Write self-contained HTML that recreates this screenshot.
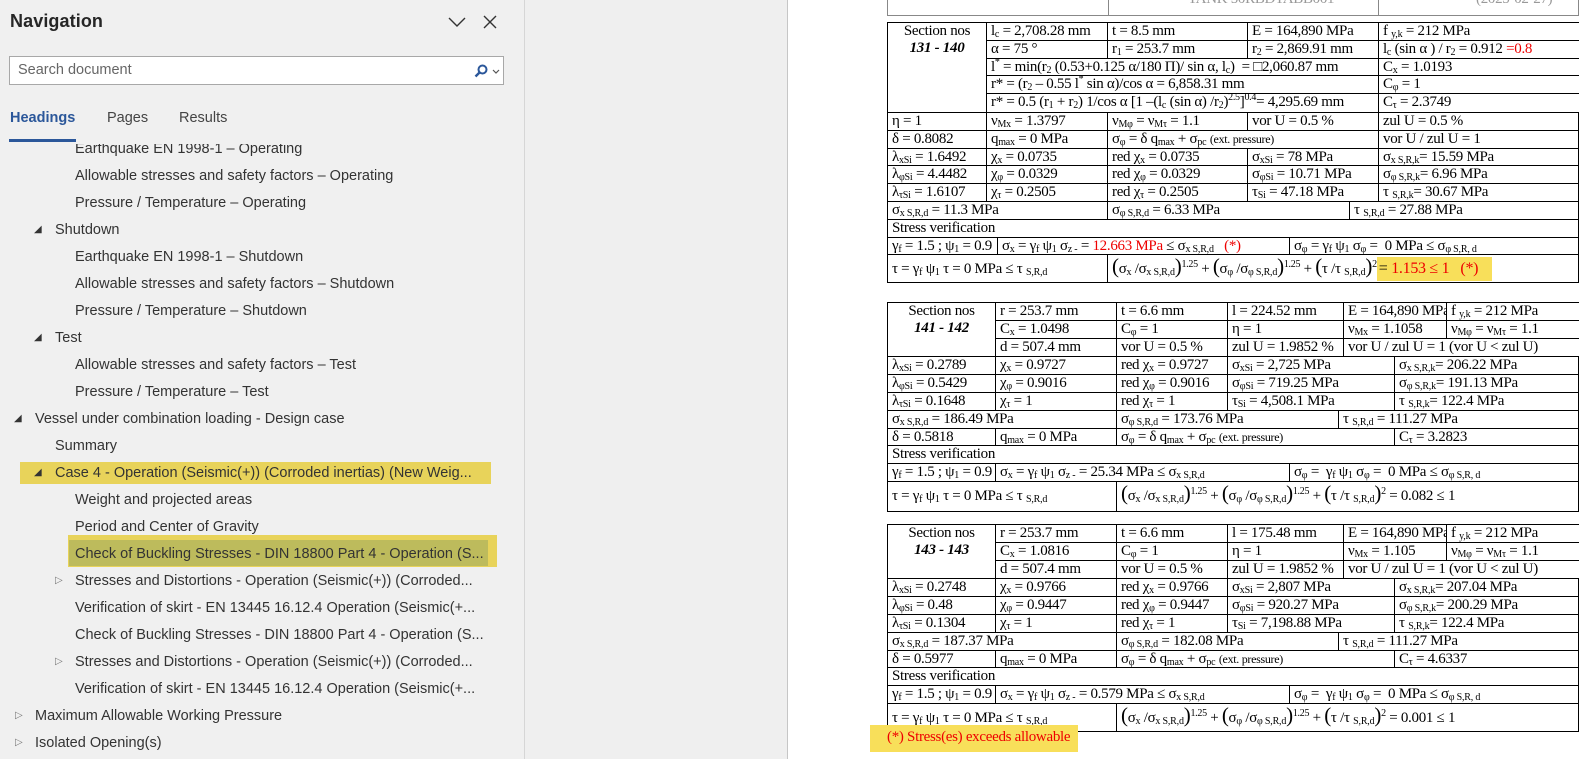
<!DOCTYPE html>
<html><head><meta charset="utf-8">
<style>
*{box-sizing:border-box;margin:0;padding:0}
body{width:1591px;height:759px;overflow:hidden;background:#fff;position:relative;font-family:"Liberation Sans",sans-serif}
#nav{position:absolute;left:0;top:0;width:525px;height:759px;background:#f0f0f0;border-right:1px solid #d6d6d6}
#mid{position:absolute;left:525px;top:0;width:263px;height:759px;background:#efefef;border-right:1px solid #c6c6c6}
.title{position:absolute;left:10px;top:11px;font-size:18px;font-weight:bold;color:#262626;letter-spacing:0.1px}
.search{position:absolute;left:9px;top:56px;width:495px;height:29px;background:#fff;border:1px solid #a8a8a8}
.search span{position:absolute;left:8px;top:5px;font-size:14.5px;color:#666}
.tab{position:absolute;top:110px;font-size:14.5px;color:#444}
.tree{position:absolute;left:0;top:144px;width:524px;height:615px;overflow:hidden}
.it{position:absolute;font-size:14.5px;color:#333;white-space:nowrap;line-height:20px}
.tri{position:absolute;font-size:10px;color:#333;line-height:20px}
.doc{font-family:"Liberation Serif",serif;font-size:15px;letter-spacing:-0.3px;color:#000}
.tb{position:absolute;left:887px;width:692px;border-top:1px solid #000;border-left:1px solid #000}
.r{display:flex;height:17.8px;border-bottom:1px solid #000}
.c{border-right:1px solid #000;padding-left:4px;white-space:nowrap;overflow:hidden;line-height:17px;height:100%}
.blk{display:flex;border-bottom:1px solid #000}
.blk .col{display:flex;flex-direction:column}
.blk .col .r:last-child{border-bottom:none}
sub{font-size:10px;vertical-align:-2px;line-height:0;letter-spacing:-0.2px}
sup{font-size:10px;vertical-align:6px;line-height:0}
.red{color:#e00}
.big{font-size:21px;line-height:0}
.tall{height:28px}
.tall .c{line-height:28px}
.hl{background:#f8df5a}
</style></head><body>
<div id="nav">
 <div class="title">Navigation</div>
 <svg style="position:absolute;left:447px;top:16px" width="20" height="12"><path d="M2 2 L10 10 L18 2" fill="none" stroke="#333" stroke-width="1.4"/></svg>
 <svg style="position:absolute;left:482px;top:14px" width="16" height="16"><path d="M2 2 L14 14 M14 2 L2 14" fill="none" stroke="#333" stroke-width="1.4"/></svg>
 <div class="search"><span>Search document</span>
  <svg style="position:absolute;left:464px;top:7px" width="14" height="14"><circle cx="8.5" cy="5.5" r="4" fill="none" stroke="#2b579a" stroke-width="2"/><path d="M6 8 L1.5 12.5" stroke="#2b579a" stroke-width="2.4"/></svg>
  <svg style="position:absolute;left:482px;top:12px" width="8" height="6"><path d="M1 1 L4 4 L7 1" fill="none" stroke="#555" stroke-width="1.2"/></svg>
 </div>
 <div class="tab" style="left:10px;color:#2b579a;font-weight:bold">Headings</div>
 <div style="position:absolute;left:9px;top:139px;width:67px;height:3px;background:#2b579a"></div>
 <div class="tab" style="left:107px">Pages</div>
 <div class="tab" style="left:179px">Results</div>
 <div class="tree">
  <div class="it" style="left:75px;top:-5px">Earthquake EN 1998-1 – Operating</div>
  <div style="position:absolute;left:20px;top:318px;width:471px;height:22px;background:#e8d35a"></div>
  <div style="position:absolute;left:68px;top:391px;width:429px;height:32px;background:#e8d35a"></div>
  <div style="position:absolute;left:69px;top:396px;width:419px;height:26px;background:#bdbb5c"></div>
  <div class="it" style="left:75px;top:22px">Allowable stresses and safety factors – Operating</div>
  <div class="it" style="left:75px;top:49px">Pressure / Temperature – Operating</div>
  <div class="tri" style="left:34px;top:76px">◢</div><div class="it" style="left:55px;top:76px">Shutdown</div>
  <div class="it" style="left:75px;top:103px">Earthquake EN 1998-1 – Shutdown</div>
  <div class="it" style="left:75px;top:130px">Allowable stresses and safety factors – Shutdown</div>
  <div class="it" style="left:75px;top:157px">Pressure / Temperature – Shutdown</div>
  <div class="tri" style="left:34px;top:184px">◢</div><div class="it" style="left:55px;top:184px">Test</div>
  <div class="it" style="left:75px;top:211px">Allowable stresses and safety factors – Test</div>
  <div class="it" style="left:75px;top:238px">Pressure / Temperature – Test</div>
  <div class="tri" style="left:14px;top:265px">◢</div><div class="it" style="left:35px;top:265px">Vessel under combination loading - Design case</div>
  <div class="it" style="left:55px;top:292px">Summary</div>
  <div class="tri" style="left:34px;top:319px">◢</div><div class="it" style="left:55px;top:319px">Case 4 - Operation (Seismic(+)) (Corroded inertias) (New Weig...</div>
  <div class="it" style="left:75px;top:346px">Weight and projected areas</div>
  <div class="it" style="left:75px;top:373px">Period and Center of Gravity</div>
  <div class="it" style="left:75px;top:400px">Check of Buckling Stresses - DIN 18800 Part 4 - Operation (S...</div>
  <div class="tri" style="left:55px;top:427px;color:#777">▷</div><div class="it" style="left:75px;top:427px">Stresses and Distortions - Operation (Seismic(+)) (Corroded...</div>
  <div class="it" style="left:75px;top:454px">Verification of skirt - EN 13445 16.12.4 Operation (Seismic(+...</div>
  <div class="it" style="left:75px;top:481px">Check of Buckling Stresses - DIN 18800 Part 4 - Operation (S...</div>
  <div class="tri" style="left:55px;top:508px;color:#777">▷</div><div class="it" style="left:75px;top:508px">Stresses and Distortions - Operation (Seismic(+)) (Corroded...</div>
  <div class="it" style="left:75px;top:535px">Verification of skirt - EN 13445 16.12.4 Operation (Seismic(+...</div>
  <div class="tri" style="left:15px;top:562px;color:#777">▷</div><div class="it" style="left:35px;top:562px">Maximum Allowable Working Pressure</div>
  <div class="tri" style="left:15px;top:589px;color:#777">▷</div><div class="it" style="left:35px;top:589px">Isolated Opening(s)</div>
 </div>
</div>
<div id="mid"></div>

<div class="doc">
<div style="position:absolute;left:887px;top:0;width:692px;height:16px;border:1px solid #888;border-top:none;overflow:hidden">
 <div style="position:absolute;left:220px;top:0;width:1px;height:16px;background:#888"></div>
 <div style="position:absolute;left:490px;top:0;width:1px;height:16px;background:#888"></div>
 <div style="position:absolute;left:300px;top:-9px;color:#999">TANK 50RBDTABB001</div>
 <div style="position:absolute;left:588px;top:-9px;color:#999">(2025-02-27)</div>
</div>

<div class="tb" style="top:22px">
 <div class="blk">
  <div class="c" style="width:99px;text-align:center;padding:0;line-height:17px;height:89px">Section nos<br><b><i>131 - 140</i></b></div>
  <div class="col" style="width:592px">
   <div class="r"><div class="c" style="width:121px">l<sub>c</sub> = 2,708.28 mm</div><div class="c" style="width:140px">t = 8.5 mm</div><div class="c" style="width:131px">E = 164,890 MPa</div><div class="c" style="width:200px;border:none">f <sub>y,k</sub> = 212 MPa</div></div>
   <div class="r"><div class="c" style="width:121px">α = 75 °</div><div class="c" style="width:140px">r<sub>1</sub> = 253.7 mm</div><div class="c" style="width:131px">r<sub>2</sub> = 2,869.91 mm</div><div class="c" style="width:200px;border:none">l<sub>c</sub> (sin α ) / r<sub>2</sub> = 0.912 <span class="red">=0.8</span></div></div>
   <div class="r"><div class="c" style="width:392px">l<sup>*</sup> = min(r<sub>2</sub> (0.53+0.125 α/180 Π)/ sin α, l<sub>c</sub>) &nbsp;= □2,060.87 mm</div><div class="c" style="width:200px;border:none">C<sub>x</sub> = 1.0193</div></div>
   <div class="r"><div class="c" style="width:392px">r* = (r<sub>2</sub> – 0.55 l<sup>*</sup> sin α)/cos α = 6,858.31 mm</div><div class="c" style="width:200px;border:none">C<sub>φ</sub> = 1</div></div>
   <div class="r"><div class="c" style="width:392px">r* = 0.5 (r<sub>1</sub> + r<sub>2</sub>) 1/cos α [1 –(l<sub>c</sub> (sin α) /r<sub>2</sub>)<sup>2.5</sup>]<sup>0.4</sup>= 4,295.69 mm</div><div class="c" style="width:200px;border:none">C<sub>τ</sub> = 2.3749</div></div>
  </div>
 </div>
 <div class="r"><div class="c" style="width:99px">η = 1</div><div class="c" style="width:121px">ν<sub>Mx</sub> = 1.3797</div><div class="c" style="width:140px">ν<sub>Mφ</sub> = ν<sub>Mτ</sub> = 1.1</div><div class="c" style="width:131px">vor U = 0.5 %</div><div class="c" style="width:200px">zul U = 0.5 %</div></div>
 <div class="r"><div class="c" style="width:99px">δ = 0.8082</div><div class="c" style="width:121px">q<sub>max</sub> = 0 MPa</div><div class="c" style="width:271px">σ<sub>φ</sub> = δ q<sub>max</sub> + σ<sub>pc</sub> <span style="font-size:12px">(ext. pressure)</span></div><div class="c" style="width:200px">vor U / zul U = 1</div></div>
 <div class="r"><div class="c" style="width:99px">λ<sub>xSi</sub> = 1.6492</div><div class="c" style="width:121px">χ<sub>x</sub> = 0.0735</div><div class="c" style="width:140px">red χ<sub>x</sub> = 0.0735</div><div class="c" style="width:131px">σ<sub>xSi</sub> = 78 MPa</div><div class="c" style="width:200px">σ<sub>x S,R,k</sub>= 15.59 MPa</div></div>
 <div class="r"><div class="c" style="width:99px">λ<sub>φSi</sub> = 4.4482</div><div class="c" style="width:121px">χ<sub>φ</sub> = 0.0329</div><div class="c" style="width:140px">red χ<sub>φ</sub> = 0.0329</div><div class="c" style="width:131px">σ<sub>φSi</sub> = 10.71 MPa</div><div class="c" style="width:200px">σ<sub>φ S,R,k</sub>= 6.96 MPa</div></div>
 <div class="r"><div class="c" style="width:99px">λ<sub>τSi</sub> = 1.6107</div><div class="c" style="width:121px">χ<sub>τ</sub> = 0.2505</div><div class="c" style="width:140px">red χ<sub>τ</sub> = 0.2505</div><div class="c" style="width:131px">τ<sub>Si</sub> = 47.18 MPa</div><div class="c" style="width:200px">τ <sub>S,R,k</sub>= 30.67 MPa</div></div>
 <div class="r"><div class="c" style="width:220px">σ<sub>x S,R,d</sub> = 11.3 MPa</div><div class="c" style="width:242px">σ<sub>φ S,R,d</sub> = 6.33 MPa</div><div class="c" style="width:229px">τ <sub>S,R,d</sub> = 27.88 MPa</div></div>
 <div class="r"><div class="c" style="width:691px">Stress verification</div></div>
 <div class="r"><div class="c" style="width:110px">γ<sub>f</sub> = 1.5 ; ψ<sub>1</sub> = 0.9</div><div class="c" style="width:292px">σ<sub>x</sub> = γ<sub>f</sub> ψ<sub>1</sub> σ<sub>z -</sub> = <span class="red">12.663 MPa</span> ≤ σ<sub>x S,R,d</sub> &nbsp;&nbsp;<span class="red">(*)</span></div><div class="c" style="width:289px">σ<sub>φ</sub> = γ<sub>f</sub> ψ<sub>1</sub> σ<sub>φ</sub> = &nbsp;0 MPa ≤ σ<sub>φ S,R, d</sub></div></div>
 <div class="r tall"><div class="c" style="width:220px">τ = γ<sub>f</sub> ψ<sub>1</sub> τ = 0 MPa ≤ τ <sub>S,R,d</sub></div><div class="c" style="width:471px"><span class="big">(</span>σ<sub>x</sub> /σ<sub>x S,R,d</sub><span class="big">)</span><sup>1.25</sup> + <span class="big">(</span>σ<sub>φ</sub> /σ<sub>φ S,R,d</sub><span class="big">)</span><sup>1.25</sup> + <span class="big">(</span>τ /τ <sub>S,R,d</sub><span class="big">)</span><sup>2</sup><span class="hl" style="display:inline-block;height:24px;line-height:24px;padding:0 14px 0 2px;font-size:16px"> = <span class="red">1.153 ≤ 1 &nbsp;&nbsp;(*)</span></span></div></div>
</div>

<div class="tb" style="top:302px">
 <div class="blk">
  <div class="c" style="width:108px;text-align:center;padding:0;height:53.4px">Section nos<br><b><i>141 - 142</i></b></div>
  <div class="col" style="width:583px">
   <div class="r"><div class="c" style="width:121px">r = 253.7 mm</div><div class="c" style="width:111px">t = 6.6 mm</div><div class="c" style="width:116px">l = 224.52 mm</div><div class="c" style="width:103px">E = 164,890 MPa</div><div class="c" style="width:132px;border:none">f <sub>y,k</sub> = 212 MPa</div></div>
   <div class="r"><div class="c" style="width:121px">C<sub>x</sub> = 1.0498</div><div class="c" style="width:111px">C<sub>φ</sub> = 1</div><div class="c" style="width:116px">η = 1</div><div class="c" style="width:103px">ν<sub>Mx</sub> = 1.1058</div><div class="c" style="width:132px;border:none">ν<sub>Mφ</sub> = ν<sub>Mτ</sub> = 1.1</div></div>
   <div class="r"><div class="c" style="width:121px">d = 507.4 mm</div><div class="c" style="width:111px">vor U = 0.5 %</div><div class="c" style="width:116px">zul U = 1.9852 %</div><div class="c" style="width:235px;border:none">vor U / zul U = 1 (vor U &lt; zul U)</div></div>
  </div>
 </div>
 <div class="r"><div class="c" style="width:108px">λ<sub>xSi</sub> = 0.2789</div><div class="c" style="width:121px">χ<sub>x</sub> = 0.9727</div><div class="c" style="width:111px">red χ<sub>x</sub> = 0.9727</div><div class="c" style="width:167px">σ<sub>xSi</sub> = 2,725 MPa</div><div class="c" style="width:184px">σ<sub>x S,R,k</sub>= 206.22 MPa</div></div>
 <div class="r"><div class="c" style="width:108px">λ<sub>φSi</sub> = 0.5429</div><div class="c" style="width:121px">χ<sub>φ</sub> = 0.9016</div><div class="c" style="width:111px">red χ<sub>φ</sub> = 0.9016</div><div class="c" style="width:167px">σ<sub>φSi</sub> = 719.25 MPa</div><div class="c" style="width:184px">σ<sub>φ S,R,k</sub>= 191.13 MPa</div></div>
 <div class="r"><div class="c" style="width:108px">λ<sub>τSi</sub> = 0.1648</div><div class="c" style="width:121px">χ<sub>τ</sub> = 1</div><div class="c" style="width:111px">red χ<sub>τ</sub> = 1</div><div class="c" style="width:167px">τ<sub>Si</sub> = 4,508.1 MPa</div><div class="c" style="width:184px">τ <sub>S,R,k</sub>= 122.4 MPa</div></div>
 <div class="r"><div class="c" style="width:229px">σ<sub>x S,R,d</sub> = 186.49 MPa</div><div class="c" style="width:222px">σ<sub>φ S,R,d</sub> = 173.76 MPa</div><div class="c" style="width:240px">τ <sub>S,R,d</sub> = 111.27 MPa</div></div>
 <div class="r"><div class="c" style="width:108px">δ = 0.5818</div><div class="c" style="width:121px">q<sub>max</sub> = 0 MPa</div><div class="c" style="width:278px">σ<sub>φ</sub> = δ q<sub>max</sub> + σ<sub>pc</sub> <span style="font-size:12px">(ext. pressure)</span></div><div class="c" style="width:184px">C<sub>τ</sub> = 3.2823</div></div>
 <div class="r"><div class="c" style="width:691px">Stress verification</div></div>
 <div class="r"><div class="c" style="width:108px">γ<sub>f</sub> = 1.5 ; ψ<sub>1</sub> = 0.9</div><div class="c" style="width:294px">σ<sub>x</sub> = γ<sub>f</sub> ψ<sub>1</sub> σ<sub>z -</sub> = 25.34 MPa ≤ σ<sub>x S,R,d</sub></div><div class="c" style="width:289px">σ<sub>φ</sub> = &nbsp;γ<sub>f</sub> ψ<sub>1</sub> σ<sub>φ</sub> = &nbsp;0 MPa ≤ σ<sub>φ S,R, d</sub></div></div>
 <div class="r tall" style="height:30px"><div class="c" style="width:229px">τ = γ<sub>f</sub> ψ<sub>1</sub> τ = 0 MPa ≤ τ <sub>S,R,d</sub></div><div class="c" style="width:462px"><span class="big">(</span>σ<sub>x</sub> /σ<sub>x S,R,d</sub><span class="big">)</span><sup>1.25</sup> + <span class="big">(</span>σ<sub>φ</sub> /σ<sub>φ S,R,d</sub><span class="big">)</span><sup>1.25</sup> + <span class="big">(</span>τ /τ <sub>S,R,d</sub><span class="big">)</span><sup>2</sup> = 0.082 ≤ 1</div></div>
</div>

<div class="tb" style="top:524px">
 <div class="blk">
  <div class="c" style="width:108px;text-align:center;padding:0;height:53.4px">Section nos<br><b><i>143 - 143</i></b></div>
  <div class="col" style="width:583px">
   <div class="r"><div class="c" style="width:121px">r = 253.7 mm</div><div class="c" style="width:111px">t = 6.6 mm</div><div class="c" style="width:116px">l = 175.48 mm</div><div class="c" style="width:103px">E = 164,890 MPa</div><div class="c" style="width:132px;border:none">f <sub>y,k</sub> = 212 MPa</div></div>
   <div class="r"><div class="c" style="width:121px">C<sub>x</sub> = 1.0816</div><div class="c" style="width:111px">C<sub>φ</sub> = 1</div><div class="c" style="width:116px">η = 1</div><div class="c" style="width:103px">ν<sub>Mx</sub> = 1.105</div><div class="c" style="width:132px;border:none">ν<sub>Mφ</sub> = ν<sub>Mτ</sub> = 1.1</div></div>
   <div class="r"><div class="c" style="width:121px">d = 507.4 mm</div><div class="c" style="width:111px">vor U = 0.5 %</div><div class="c" style="width:116px">zul U = 1.9852 %</div><div class="c" style="width:235px;border:none">vor U / zul U = 1 (vor U &lt; zul U)</div></div>
  </div>
 </div>
 <div class="r"><div class="c" style="width:108px">λ<sub>xSi</sub> = 0.2748</div><div class="c" style="width:121px">χ<sub>x</sub> = 0.9766</div><div class="c" style="width:111px">red χ<sub>x</sub> = 0.9766</div><div class="c" style="width:167px">σ<sub>xSi</sub> = 2,807 MPa</div><div class="c" style="width:184px">σ<sub>x S,R,k</sub>= 207.04 MPa</div></div>
 <div class="r"><div class="c" style="width:108px">λ<sub>φSi</sub> = 0.48</div><div class="c" style="width:121px">χ<sub>φ</sub> = 0.9447</div><div class="c" style="width:111px">red χ<sub>φ</sub> = 0.9447</div><div class="c" style="width:167px">σ<sub>φSi</sub> = 920.27 MPa</div><div class="c" style="width:184px">σ<sub>φ S,R,k</sub>= 200.29 MPa</div></div>
 <div class="r"><div class="c" style="width:108px">λ<sub>τSi</sub> = 0.1304</div><div class="c" style="width:121px">χ<sub>τ</sub> = 1</div><div class="c" style="width:111px">red χ<sub>τ</sub> = 1</div><div class="c" style="width:167px">τ<sub>Si</sub> = 7,198.88 MPa</div><div class="c" style="width:184px">τ <sub>S,R,k</sub>= 122.4 MPa</div></div>
 <div class="r"><div class="c" style="width:229px">σ<sub>x S,R,d</sub> = 187.37 MPa</div><div class="c" style="width:222px">σ<sub>φ S,R,d</sub> = 182.08 MPa</div><div class="c" style="width:240px">τ <sub>S,R,d</sub> = 111.27 MPa</div></div>
 <div class="r"><div class="c" style="width:108px">δ = 0.5977</div><div class="c" style="width:121px">q<sub>max</sub> = 0 MPa</div><div class="c" style="width:278px">σ<sub>φ</sub> = δ q<sub>max</sub> + σ<sub>pc</sub> <span style="font-size:12px">(ext. pressure)</span></div><div class="c" style="width:184px">C<sub>τ</sub> = 4.6337</div></div>
 <div class="r"><div class="c" style="width:691px">Stress verification</div></div>
 <div class="r"><div class="c" style="width:108px">γ<sub>f</sub> = 1.5 ; ψ<sub>1</sub> = 0.9</div><div class="c" style="width:294px">σ<sub>x</sub> = γ<sub>f</sub> ψ<sub>1</sub> σ<sub>z -</sub> = 0.579 MPa ≤ σ<sub>x S,R,d</sub></div><div class="c" style="width:289px">σ<sub>φ</sub> = &nbsp;γ<sub>f</sub> ψ<sub>1</sub> σ<sub>φ</sub> = &nbsp;0 MPa ≤ σ<sub>φ S,R, d</sub></div></div>
 <div class="r tall"><div class="c" style="width:229px">τ = γ<sub>f</sub> ψ<sub>1</sub> τ = 0 MPa ≤ τ <sub>S,R,d</sub></div><div class="c" style="width:462px"><span class="big">(</span>σ<sub>x</sub> /σ<sub>x S,R,d</sub><span class="big">)</span><sup>1.25</sup> + <span class="big">(</span>σ<sub>φ</sub> /σ<sub>φ S,R,d</sub><span class="big">)</span><sup>1.25</sup> + <span class="big">(</span>τ /τ <sub>S,R,d</sub><span class="big">)</span><sup>2</sup> = 0.001 ≤ 1</div></div>
</div>

<div style="position:absolute;left:870px;top:725px;width:208px;height:27px;background:#f8df5a"></div>
<div class="red" style="position:absolute;left:887px;top:729px;font-size:15px">(*) Stress(es) exceeds allowable</div>
</div>
</body></html>
